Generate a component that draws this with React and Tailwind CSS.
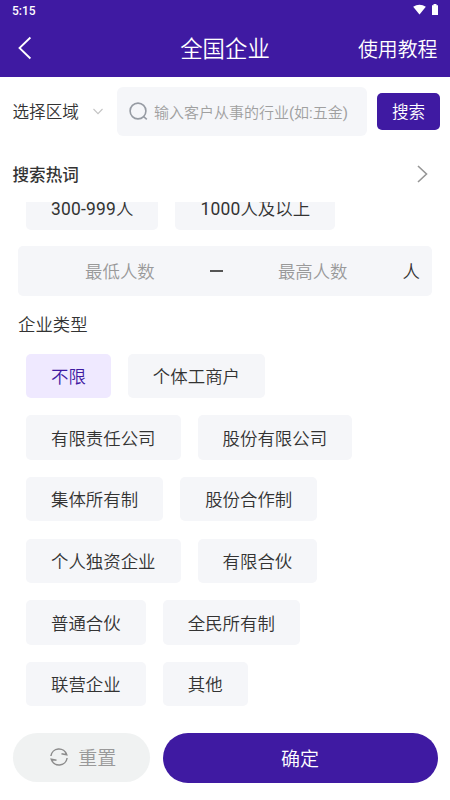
import React from "react";

const companyTypes = [
  ["不限", "个体工商户"],
  ["有限责任公司", "股份有限公司"],
  ["集体所有制", "股份合作制"],
  ["个人独资企业", "有限合伙"],
  ["普通合伙", "全民所有制"],
  ["联营企业", "其他"],
];

function Chip({ count, label, active }) {
  return (
    <button
      className={
        "h-[44.4px] shrink-0 whitespace-nowrap rounded-[5px] px-[25px] pt-[4px] text-[17.43px] leading-none " +
        (active ? "bg-[#efe9ff] text-[#3f1aa2]" : "bg-[#f5f6f9] text-[#333333]")
      }
    >
      {count && <span className="font-normal tracking-[0.2px]">{count}</span>}
      {label}
    </button>
  );
}

function Header() {
  return (
    <header className="h-[76.5px] shrink-0 bg-[#3f1aa2] text-white">
      <div className="flex h-5 items-center justify-between pl-3 pr-[12px]">
        <span className="pt-px text-[12px] font-medium leading-none">5:15</span>
        <div className="flex items-center gap-[6px]">
          <svg width="13" height="11" viewBox="0 0 13 11" className="mt-[-2px]">
            <path d="M0.2 2.8C4 -0.1 9 -0.1 12.8 2.8L6.5 10.5Z" fill="currentColor" />
          </svg>
          <svg width="6" height="11" viewBox="0 0 6 11" className="mt-[-2px]">
            <path d="M1.5 0h3v1.2H6V11H0V1.2h1.5z" fill="currentColor" />
          </svg>
        </div>
      </div>
      <div className="grid h-14 grid-cols-[1fr_auto_1fr] items-center pl-[12.5px] pr-[12.5px]">
        <svg width="14" height="24" viewBox="0 0 14 24" fill="none" stroke="currentColor" strokeWidth="1.8" className="ml-[5px]">
          <path d="M12.4 1.5L1.5 12L12.4 22.5" />
        </svg>
        <h1 className="pt-[3px] text-[22.4px] leading-none">全国企业</h1>
        <span className="justify-self-end pt-[5px] text-[19.9px] leading-none">使用教程</span>
      </div>
    </header>
  );
}

function SearchRow() {
  return (
    <div className="mt-[10.5px] flex h-[49px] shrink-0 items-center pl-[12.5px] pr-[10px]">
      <span className="pt-[4px] text-[16.6px] leading-none">选择区域</span>
      <svg width="10" height="7" viewBox="0 0 10 7" fill="none" stroke="#c4c4c4" strokeWidth="1.1" className="ml-[14px]">
        <path d="M0.5 1L5 5.6L9.5 1" />
      </svg>
      <div className="ml-[14px] flex h-[49px] w-[250px] items-center rounded-[6px] bg-[#f5f6f9] pl-[12px]">
        <svg width="19" height="19" viewBox="0 0 19 19" fill="none" stroke="#969ba3" strokeWidth="1.6">
          <circle cx="9" cy="9" r="7.9" />
          <path d="M14.5 14.5L17.8 17.4" />
        </svg>
        <span className="ml-[6px] whitespace-nowrap pt-[3px] text-[15px] leading-none text-[#a0a0a0]">
          输入客户从事的行业<span className="font-normal">(</span>如<span className="font-normal">:</span>五金<span className="font-normal">)</span>
        </span>
      </div>
      <button className="ml-auto h-[37.5px] w-[63px] rounded-[5px] bg-[#3f1aa2] pt-[3px] text-[16.6px] leading-none text-white">
        搜索
      </button>
    </div>
  );
}

function HeadcountRange() {
  return (
    <div className="mx-[18px] mt-4 flex h-[50px] items-center rounded-[5px] bg-[#f5f6f9] px-3 text-[17.4px] leading-none">
      <span className="flex-1 pt-[4px] text-center text-[#999999]">最低人数</span>
      <span className="h-[1.5px] w-[13px] bg-[#555555]" />
      <span className="flex-1 pt-[4px] text-center text-[#999999]">最高人数</span>
      <span className="pt-[4px]">人</span>
    </div>
  );
}

export default function App() {
  return (
    <div className="flex h-[800px] w-[450px] flex-col overflow-hidden bg-white font-[Roboto,'Noto_Sans_CJK_SC',sans-serif] font-[350] text-[#333333]">
      <Header />
      <SearchRow />
      <div className="mt-[12px] flex h-[52px] shrink-0 items-center justify-between pl-[12.5px] pr-[22px]">
        <h2 className="pt-[4px] text-[16.6px] font-medium leading-none">搜索热词</h2>
        <svg width="11" height="18" viewBox="0 0 11 18" fill="none" stroke="#969696" strokeWidth="1.6">
          <path d="M1 1L9.5 9L1 17" />
        </svg>
      </div>
      <main className="mt-[2px] min-h-0 flex-1 overflow-hidden">
        <div className="mt-[-16.4px] flex gap-[17px] pl-[26px]">
          <Chip count="300-999" label="人" />
          <Chip count="1000" label="人及以上" />
        </div>
        <HeadcountRange />
        <h3 className="ml-[18px] flex h-[57.6px] items-center pt-[2px] text-[17.4px] leading-none">企业类型</h3>
        <div className="flex flex-col gap-[17.25px] pl-[26px]">
          {companyTypes.map((row, r) => (
            <div key={r} className="flex gap-[17px]">
              {row.map((label) => (
                <Chip key={label} label={label} active={label === "不限"} />
              ))}
            </div>
          ))}
        </div>
      </main>
      <footer className="mb-[17.5px] mt-[10px] flex h-[50px] shrink-0 items-center gap-[12.5px] px-[12.5px]">
        <button className="flex h-[49px] w-[137.5px] items-center justify-center gap-[10px] rounded-full bg-[#f0f2f2] pl-[4px] text-[19px] leading-none text-[#999999]">
          <svg width="18" height="18" viewBox="0 0 18 18" fill="none" stroke="#8c8c8c" strokeWidth="1.5" className="mt-[-1px]">
            <path d="M0.9 8A8.1 8.1 0 0 1 16.7 6.8L11.5 5.8" />
            <path d="M17.1 10A8.1 8.1 0 0 1 1.3 11.2L6.5 12.2" />
          </svg>
          <span className="pt-[2px]">重置</span>
        </button>
        <button className="h-[50px] flex-1 rounded-full bg-[#3f1aa2] pt-[4px] text-[19px] leading-none text-white">确定</button>
      </footer>
    </div>
  );
}
